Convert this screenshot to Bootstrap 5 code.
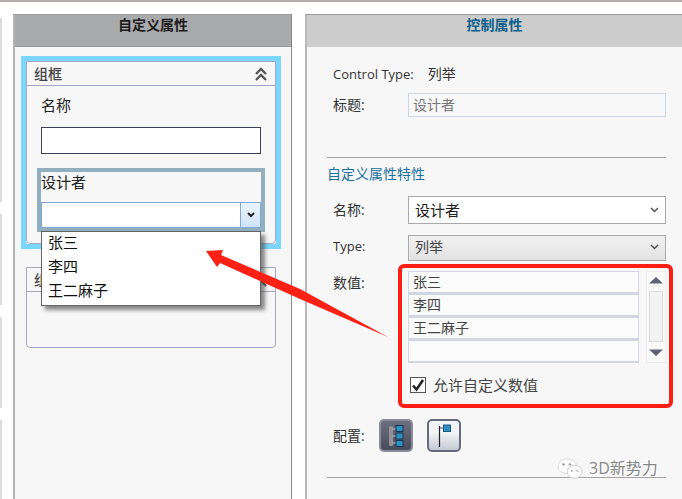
<!DOCTYPE html>
<html lang="zh">
<head>
<meta charset="utf-8">
<title>自定义属性</title>
<link href="https://cdn.jsdelivr.net/npm/bootstrap@5.3.0/dist/css/bootstrap.min.css" rel="stylesheet">
<style>
html,body{height:499px;overflow:hidden;background:#fff}
body{font-family:"Open Sans","Noto Sans CJK SC",sans-serif;font-size:14px;line-height:20px;color:#333}
.stage{position:relative;width:682px;height:499px;overflow:hidden;border-top:2px solid #b5adab;padding-top:12px}
.edge{position:absolute;left:0;width:2px;background:#dcdcdc}
.edge-a{top:16px;height:184px}
.edge-b{top:212px;height:91px}
.edge-c{top:315px;height:91px}
.edge-d{top:418px;height:81px}
.lat{font-size:13px}
.pane{height:485px;background:#f7f7f7;border-top:1px solid #9c9c9c}
.pane-l{width:279px;margin-left:13px;border-left:2px solid #b4b4b4;border-right:1px solid #858585}
.pane-r{width:377px;margin-left:13px;border-left:2px solid #b9b9b9}
.pane-head{height:32px;font-weight:700;font-size:14px;line-height:20px;text-align:center}
.pane-l .pane-head{background:#a9aaac;color:#1c1c1c;border-bottom:1px solid #98999b}
.pane-r .pane-head{background:#cdcdcd;color:#0b5f8a}
.sel-frame{margin:9px 10px 0 6px;border:5px solid #7bd6fd;height:193px}
.grp{border:1px solid #a4a8c4;border-radius:0 0 4px 4px;background:#f7f7f7}
.grp-a{height:183px}
.grp-b{height:81px;margin:18px 15px 0 11px;overflow:hidden}
.grp-head{height:24px;padding:0 7px;border-bottom:1px solid #a4a8c4;font-size:14px;line-height:20px;color:#444;font-weight:500}
.fld-label{margin:9px 0 0 14px;font-size:15px;line-height:20px;color:#222}
.fld-input{display:block;margin:12px 14px 0;height:27px;background:#fff;border:1px solid #3d4058}
.fld-box{margin:14px 10px 0;height:64px;border:4px solid #91afbe;background:#f7f7f7}
.fld-box .cap{height:30px;font-size:15px;line-height:20px;color:#222}
.combo{height:26px;background:#fff;border:1px solid #7ea9dc;border-right:0}
.combo-btn{width:21px;height:26px;background:linear-gradient(#ecf4fd,#cfe3f9);border:1px solid #7ea9dc}
.drop{position:absolute;left:41px;top:229px;width:220px;height:75px;background:#fff;border:1px solid #646464;box-shadow:4px 4px 4px rgba(70,70,70,.65);z-index:3;padding:0 0 0 6px;font-size:15px;color:#111;line-height:24px}
.drop-list{margin-top:-2px}
.arrow{position:absolute;left:200px;top:245px;z-index:5}
.body-r{padding:0 0 0 20px}
.row-l{width:81px;padding-left:6px;flex:none;color:#333}
.info{padding:17px 0 0 6px;height:46px;line-height:20px}
.info-val{margin-left:14px}
.ttl-input{width:258px;height:24px;background:#f8f8f8;border:1px solid #cdd4e6;color:#777;padding-left:4px;line-height:21px}
.rule{height:1px;background:#a4a4a4;width:339px}
.rule-a{margin-top:40px}
.rule-b{margin-top:25px}
.sec{color:#17719f;margin-top:6px;line-height:20px;height:20px}
.row-name{margin-top:12px}
.row-type{margin-top:11px}
.row-vals{margin-top:10px}
.vals-l{padding-top:2px}
.row-check{margin:12px 0 0 83px}
.row-cfg{margin-top:24px}
.pick{width:258px;height:28px;background:#fff;border:1px solid #aaa;font-size:15px;line-height:24px;padding:0 6px;color:#222}
.pick-off{height:26px;background:linear-gradient(#f1f1f1,#e2e2e2);font-size:14px;line-height:22px;color:#444;overflow:hidden;padding-bottom:3px}
.type-l{padding-bottom:4px}
.vlist{width:231px}
.vitem{height:23px;background:#fbfbfb;border:1px solid #d2d5e2;border-bottom-width:2px;padding-left:4px;line-height:20px;color:#444;font-size:14px}
.vscroll{width:20px;height:92px;margin-left:7px;border:1px solid #ececf2;background:#fafafa;padding:5px 2px}
.vthumb{width:14px;height:51px;margin:7px 0;background:#f3f3f3;border:1px solid #dcdcdc}
.tick{width:16px;height:16px;background:#fff;border:1px solid #555}
.chk-text{margin-left:7px;font-size:15px;color:#444}
.cfg-l{width:52px;padding-left:6px;flex:none}
.btn-cfg{width:34px;height:33px;border-radius:5px;padding:0;border:2px solid #a9adbf}
.btn-on{background:linear-gradient(#6e6f7d,#4a4c5c);border-color:#8a8c9c}
.btn-off{background:linear-gradient(#f2f3f6 40%,#c4c9d2);border-color:#666b7c;margin-left:14px}
.redbox{position:absolute;left:398px;top:262px;width:275px;height:144px;border:4px solid #fb1e12;border-radius:6px;z-index:4}
.mark-wm{position:absolute;left:557px;top:455px;z-index:6;color:#858585;font-size:16px;line-height:22px;text-shadow:1px 1px 0 #fff,-1px -1px 0 #fff}
.wm-text{margin-left:6px;margin-top:-2px}
</style>
</head>
<body>
<div class="stage d-flex">
  <i class="edge edge-a"></i>
  <i class="edge edge-b"></i>
  <i class="edge edge-c"></i>
  <i class="edge edge-d"></i>

  <section class="pane pane-l">
    <div class="pane-head">自定义属性</div>
    <div class="sel-frame">
      <div class="grp grp-a">
        <div class="grp-head d-flex justify-content-between align-items-center">
          <span>组框</span>
          <svg width="14" height="14" viewBox="0 0 14 14" fill="none" stroke="#555" stroke-width="2.400"><path d="M2 7l5-5 5 5M2 13l5-5 5 5"/></svg>
        </div>
        <div class="fld-label">名称</div>
        <div class="fld-input"></div>
        <div class="fld-box">
          <div class="cap">设计者</div>
          <div class="d-flex">
            <div class="combo flex-grow-1"></div>
            <div class="combo-btn d-flex align-items-center justify-content-center">
              <svg width="8" height="6" viewBox="0 0 8 6" fill="none" stroke="#222" stroke-width="2"><path d="M1 1l3 3 3-3"/></svg>
            </div>
          </div>
        </div>
      </div>
    </div>
    <div class="grp grp-b">
      <div class="grp-head d-flex justify-content-between align-items-center"><span>组框</span>
        <svg width="14" height="14" viewBox="0 0 14 14" fill="none" stroke="#555" stroke-width="2.400"><path d="M2 7l5-5 5 5M2 13l5-5 5 5"/></svg>
      </div>
    </div>
  </section>

  <section class="pane pane-r">
    <div class="pane-head">控制属性</div>
    <div class="body-r">
      <div class="info d-flex"><span class="lat">Control Type:</span><span class="info-val">列举</span></div>
      <div class="d-flex align-items-center">
        <span class="row-l">标题:</span>
        <div class="ttl-input">设计者</div>
      </div>
      <div class="rule rule-a"></div>
      <div class="sec">自定义属性特性</div>
      <div class="d-flex align-items-center row-name">
        <span class="row-l">名称:</span>
        <div class="pick d-flex justify-content-between align-items-center"><span>设计者</span>
          <svg width="9" height="6" viewBox="0 0 9 6" fill="none" stroke="#555" stroke-width="1.5"><path d="M1 1l3.500 3.500L8 1"/></svg>
        </div>
      </div>
      <div class="d-flex align-items-center row-type">
        <span class="row-l lat type-l">Type:</span>
        <div class="pick pick-off d-flex justify-content-between align-items-center"><span>列举</span>
          <svg width="9" height="6" viewBox="0 0 9 6" fill="none" stroke="#555" stroke-width="1.5"><path d="M1 1l3.500 3.500L8 1"/></svg>
        </div>
      </div>
      <div class="d-flex row-vals">
        <span class="row-l vals-l">数值:</span>
        <div class="vlist">
          <div class="vitem">张三</div>
          <div class="vitem">李四</div>
          <div class="vitem">王二麻子</div>
          <div class="vitem"></div>
        </div>
        <div class="vscroll">
          <svg class="d-block" width="14" height="7" viewBox="0 0 14 7"><path d="M7 0l7 6.500H0z" fill="#5e6474"/></svg>
          <div class="vthumb"></div>
          <svg class="d-block" width="14" height="7" viewBox="0 0 14 7"><path d="M0 .5h14L7 7z" fill="#5e6474"/></svg>
        </div>
      </div>
      <div class="d-flex align-items-center row-check">
        <div class="tick d-flex align-items-center justify-content-center">
          <svg width="14" height="14" viewBox="0 0 14 14" fill="none" stroke="#222" stroke-width="2.500"><path d="M2 7.500l3.500 4L12 2"/></svg>
        </div>
        <span class="chk-text">允许自定义数值</span>
      </div>
      <div class="d-flex align-items-center row-cfg">
        <span class="cfg-l">配置:</span>
        <button type="button" class="btn btn-cfg btn-on d-flex align-items-center justify-content-center">
          <svg width="18" height="24" viewBox="0 0 18 24"><rect x="2" y="2" width="4" height="20" rx="1.500" fill="#8f909b"/><path d="M5 5h5M5 12h5M5 19h5" stroke="#c4c4c8"/><rect x="9" y="1.500" width="7" height="6" fill="#2f8fc4" stroke="#12384f"/><rect x="9" y="9" width="7" height="6" fill="#2f8fc4" stroke="#12384f"/><rect x="9" y="16.500" width="7" height="6" fill="#2f8fc4" stroke="#12384f"/></svg>
        </button>
        <button type="button" class="btn btn-cfg btn-off d-flex align-items-center justify-content-center">
          <svg width="18" height="24" viewBox="0 0 18 24"><path d="M4.500 2v21" stroke="#222" stroke-width="1.200"/><path d="M5 4h4" stroke="#555"/><rect x="8.500" y="1" width="7" height="6.500" fill="#2f8fc4" stroke="#1b5a80"/></svg>
        </button>
      </div>
      <div class="rule rule-b"></div>
    </div>
  </section>

  <div class="drop"><div class="drop-list"><div>张三</div><div>李四</div><div>王二麻子</div></div></div>
  <div class="redbox"></div>
  <svg class="arrow" width="195" height="95" viewBox="200 245 195 95"><path d="M206 249L223 248L221 253L300 287L388 335L300 297L220 261L217 265Z" fill="#fb2115"/></svg>
  <div class="mark-wm d-flex align-items-center">
    <svg width="26" height="24" viewBox="0 0 28 24"><ellipse cx="11" cy="9" rx="10" ry="8" fill="#fff" stroke="#d4d4d4"/><ellipse cx="19" cy="15" rx="8" ry="7" fill="#fff" stroke="#c8c8c8"/><circle cx="7" cy="7" r="1.300" fill="#999"/><circle cx="14" cy="7" r="1.300" fill="#999"/><circle cx="16" cy="14" r="1" fill="#999"/><circle cx="22" cy="14" r="1" fill="#999"/></svg>
    <span class="wm-text">3D新势力</span>
  </div>
</div>
<script src="https://cdn.jsdelivr.net/npm/bootstrap@5.3.0/dist/js/bootstrap.bundle.min.js"></script>
</body>
</html>
